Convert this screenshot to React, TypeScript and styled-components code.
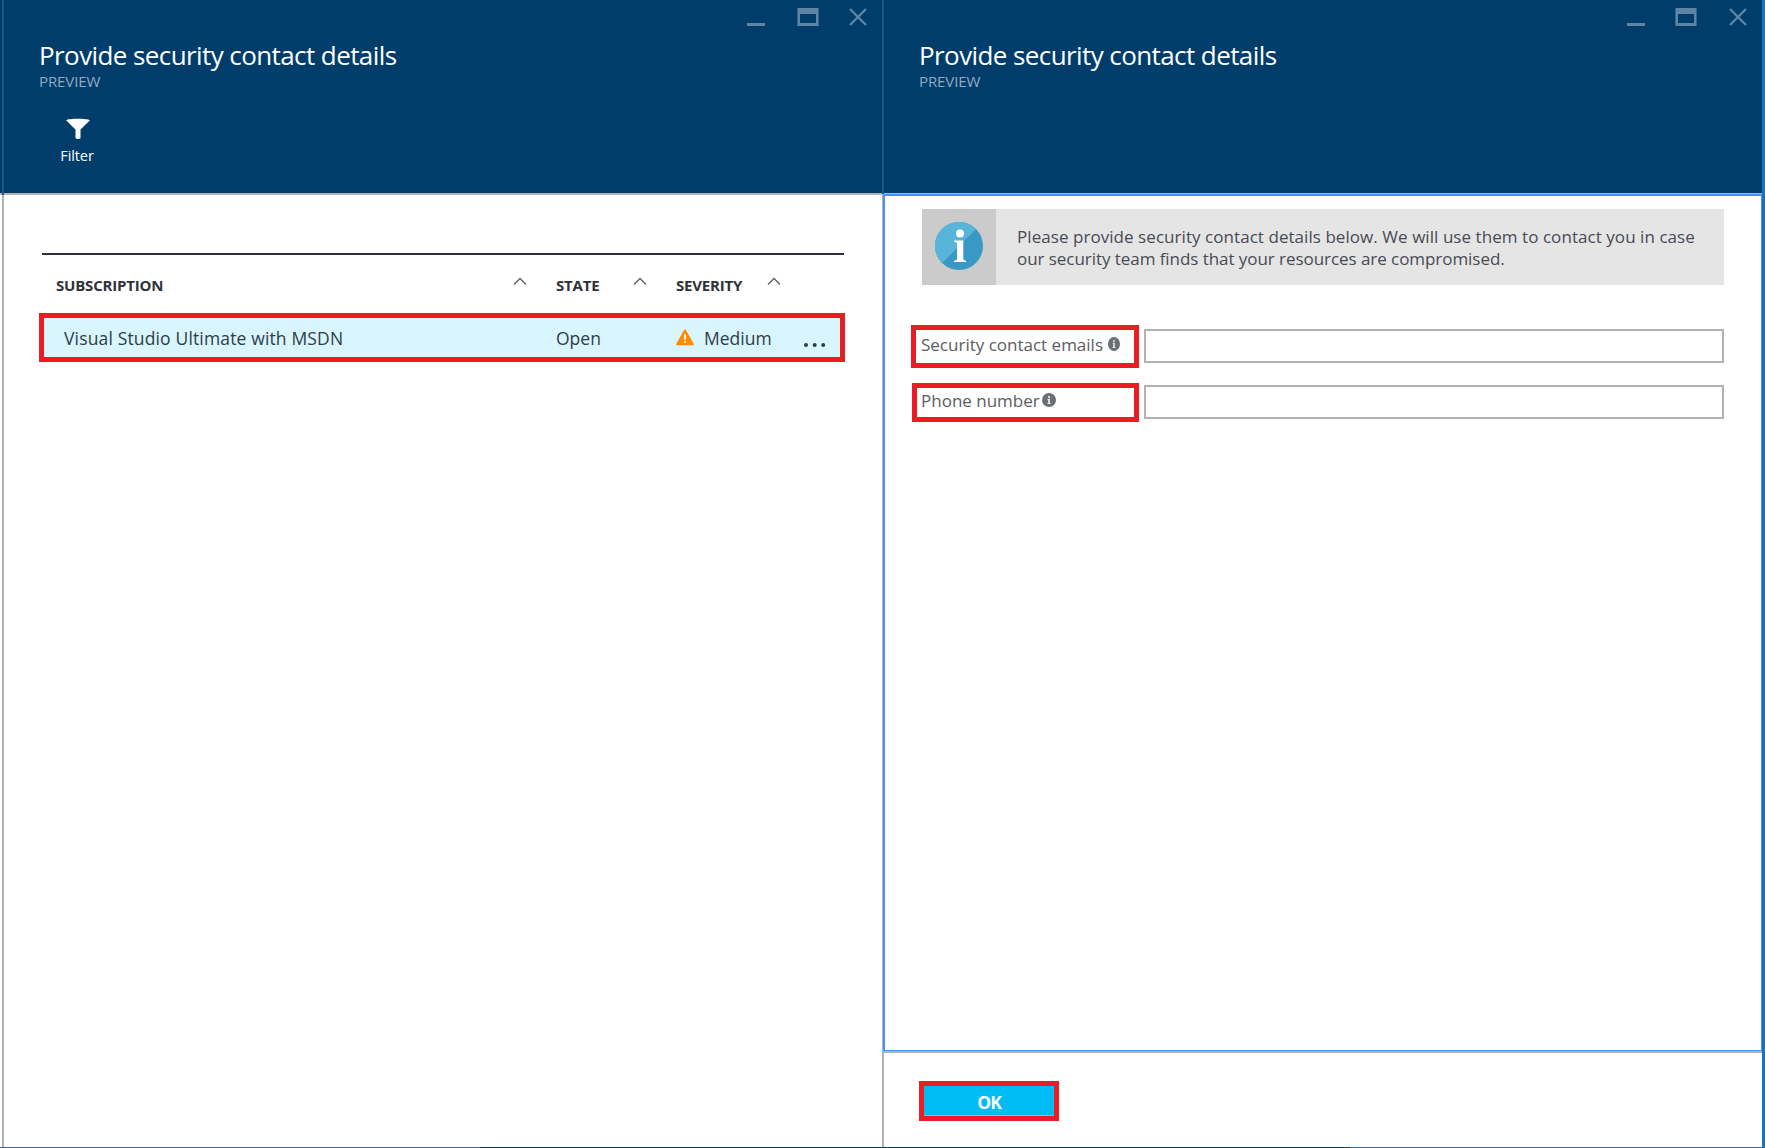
import React from "react";
import styled, { createGlobalStyle } from "styled-components";

const Global = createGlobalStyle`
  * { box-sizing: border-box; }
  body { margin: 0; background: #fff; overflow: hidden; }
  body, input, button { font-family: "Open Sans", "Noto Sans", sans-serif; }
`;

const Screen = styled.div`
  display: grid;
  grid-template-columns: 2px 880px 880px 3px;
  grid-template-rows: 1147px 1px;
  width: 1765px;
  height: 1148px;
`;

const Gutter = styled.div`
  border-top: 193px solid #003d6b;
  &::after { content: ""; display: block; height: 2px; background: #b3b3b3; }
`;

const DesktopEdge = styled.div`
  background: #1074c8;
`;

const BottomEdge = styled.div`
  grid-column: 1 / -1;
  background: linear-gradient(to right, #1074c8 480px, #0a4068 480px 1350px, #1074c8 1350px);
`;

const Blade = styled.section`
  display: flex;
  flex-direction: column;
  min-width: 0;
`;

const BladeHeader = styled.header<{ $line: number }>`
  flex: none;
  height: ${(p) => 193 + p.$line}px;
  background: #003d6b;
  border-left: 2px solid #1f5480;
  box-shadow: inset 0 -${(p) => p.$line}px #b3b3b3;
  color: #fff;
  display: flex;
  flex-direction: column;
`;

const WindowButtons = styled.div`
  display: flex;
  justify-content: flex-end;
  padding: 8px 15px 0 0;
  height: 39px;
`;

const WindowIcon = styled.svg<{ $gap?: number }>`
  display: block;
  height: 18px;
  margin-right: ${(p) => p.$gap ?? 0}px;
  color: #5e84a4;
`;

const Title = styled.h1`
  margin: 0 0 0 35px;
  height: 33px;
  font-size: 26px;
  font-weight: 400;
  line-height: 33px;
  letter-spacing: -0.59px;
  white-space: nowrap;
`;

const Subtitle = styled.div`
  margin: 0 0 0 35px;
  height: 20px;
  font-size: 15px;
  line-height: 19px;
  font-weight: 500;
  letter-spacing: -0.1px;
  color: #91abc1;
`;

const Command = styled.button`
  align-self: flex-start;
  margin: 26px 0 0 42px;
  padding: 0;
  width: 62px;
  border: 0;
  background: none;
  color: #fff;
  font-size: 14.5px;
  font-weight: 500;
  line-height: 20px;
  letter-spacing: -0.1px;
  display: flex;
  flex-direction: column;
  align-items: center;
  gap: 7px;
  svg { margin-left: 2px; }
`;

const ListBody = styled.div`
  flex: 1;
  border-left: 2px solid #b3b3b3;
  padding: 58px 37px 0 35px;
`;

const HeadRow = styled.div`
  margin: 0 1px 0 3px;
  height: 60px;
  border-top: 2px solid #2f323a;
  display: grid;
  grid-template-columns: 500px 120px 1fr;
  padding: 20px 0 0 14px;
`;

const HeadCell = styled.div<{ $w: number }>`
  display: flex;
  width: ${(p) => p.$w}px;
  justify-content: space-between;
  align-items: flex-start;
  font-size: 15px;
  line-height: 21px;
  font-weight: 700;
  letter-spacing: -0.2px;
  color: #2f323a;
`;

const Caret = styled.svg`
  margin-top: 2px;
  flex: none;
`;

const Row = styled.div`
  height: 49px;
  border: 5px solid #ed1c24;
  background: #d9f5fe;
  display: grid;
  grid-template-columns: 492px 120px 28px 100px 1fr;
  align-items: center;
  padding: 0 0 0 20px;
  color: #2f3d48;
  font-size: 17.5px;
  font-weight: 500;
  line-height: 24px;
  white-space: nowrap;
`;

const Cell = styled.span<{ $ls?: number }>`
  padding-top: 1px;
  letter-spacing: ${(p) => p.$ls ?? 0}px;
`;

const FormFrame = styled.div`
  height: 857px;
  border-left: 1px solid #b3b3b3;
`;

const FormBody = styled.div`
  height: 100%;
  border: 2px solid #4a90ff;
  border-right-width: 1px;
  border-bottom-width: 1px;
  padding: 13px 37px 0 26px;
  display: flex;
  flex-direction: column;
`;

const InfoBar = styled.div`
  display: flex;
  height: 76px;
  margin-left: 11px;
  background: #e5e5e5;
`;

const InfoBadge = styled.div`
  width: 74px;
  background: #cbcbcb;
  padding: 13px;
`;

const InfoText = styled.p`
  margin: 0;
  padding: 17px 0 0 21px;
  font-size: 17px;
  line-height: 22px;
  color: #484b54;
  white-space: nowrap;
`;

const InfoLine = styled.span<{ $ls: number }>`
  display: block;
  letter-spacing: ${(p) => p.$ls}px;
`;

const Field = styled.div<{ $top: number }>`
  display: flex;
  justify-content: flex-end;
  align-items: flex-start;
  margin-top: ${(p) => p.$top}px;
`;

const FieldLabel = styled.label<{ $w: number; $h: number; $pad: number; $gap: number; $line: number; $icon: number }>`
  display: flex;
  width: ${(p) => p.$w}px;
  height: ${(p) => p.$h}px;
  border: 5px solid #ed1c24;
  padding-left: ${(p) => p.$pad}px;
  gap: ${(p) => p.$gap}px;
  margin-right: 5px;
  font-size: 17px;
  line-height: ${(p) => p.$line}px;
  color: #5a5d62;
  white-space: nowrap;
  svg { margin-top: ${(p) => p.$icon}px; flex: none; }
`;

const TextInput = styled.input<{ $top: number }>`
  width: 580px;
  height: 34px;
  margin: ${(p) => p.$top}px 0 0;
  border: 2px solid #b3b3b3;
  background: #fff;
  outline: none;
`;

const Footer = styled.footer`
  flex: 1;
  border-left: 2px solid #b3b3b3;
  border-top: 2px solid #b3b3b3;
  padding: 28px 0 0 35px;
`;

const OkButton = styled.button`
  display: block;
  width: 140px;
  height: 40px;
  padding: 1px 0 0;
  border: 5px solid #ed1c24;
  background: #00bcf5;
  box-shadow: inset 0 -1px #8fb6cc;
  color: #fff;
  font-size: 17.5px;
  font-weight: 700;
  line-height: 30px;
  letter-spacing: -1px;
`;

function WindowControls({ gaps }: { gaps: [number, number] }) {
  return (
    <WindowButtons>
      <WindowIcon $gap={gaps[0]} width="18" height="18" viewBox="0 0 18 18">
        <path d="M0 15h18v3H0z" fill="currentColor" />
      </WindowIcon>
      <WindowIcon $gap={gaps[1]} width="22" height="18" viewBox="0 0 22 18">
        <path fillRule="evenodd" d="M.4 0h21.2v18H.4zM3 6v9h16V6z" fill="currentColor" />
      </WindowIcon>
      <WindowIcon width="18" height="18" viewBox="0 0 18 18">
        <path d="M1 1l16 16M17 1L1 17" stroke="currentColor" strokeWidth="2.4" />
      </WindowIcon>
    </WindowButtons>
  );
}

function SortCaret() {
  return (
    <Caret width="14" height="9" viewBox="0 0 14 9">
      <path d="M1 7.500l6-6 6 6" fill="none" stroke="#5d6066" strokeWidth="1.3" />
    </Caret>
  );
}

function HintIcon({ width }: { width: number }) {
  return (
    <svg width={width} height="14" viewBox="0 0 14 14" preserveAspectRatio="none">
      <circle cx="7" cy="7" r="7" fill="#6b6e73" />
      <path d="M6 3h2v1.700H6zM5.400 5.700H8v4.300h.7v1H5.400v-1H6.100V6.700h-.7z" fill="#e4e5e6" />
    </svg>
  );
}

export default function App() {
  return (
    <>
      <Global />
      <Screen>
        <Gutter />
        <Blade>
          <BladeHeader $line={2}>
            <WindowControls gaps={[32, 30]} />
            <Title>Provide security contact details</Title>
            <Subtitle>PREVIEW</Subtitle>
            <Command>
              <svg width="24" height="21" viewBox="0 0 24 21">
                <path d="M0 2.2C3 .2 21 .2 24 2.2L14.5 11.5V20.2q-2.5 1.4-5 0V11.5z" fill="#fff" />
              </svg>
              Filter
            </Command>
          </BladeHeader>
          <ListBody>
            <HeadRow>
              <HeadCell $w={471}>SUBSCRIPTION<SortCaret /></HeadCell>
              <HeadCell $w={91}>STATE<SortCaret /></HeadCell>
              <HeadCell $w={105}>SEVERITY<SortCaret /></HeadCell>
            </HeadRow>
            <Row>
              <Cell $ls={0.15}>Visual Studio Ultimate with MSDN</Cell>
              <Cell>Open</Cell>
              <svg width="18" height="17" viewBox="0 0 18 17">
                <path d="M9 .5q.7 0 1.2.9l7.5 13.400q.6 1.500-.8 1.500H1.100q-1.400 0-.8-1.500L7.800 1.400Q8.300.5 9 .5z" fill="#ff8c00" />
                <path d="M8 5.500h2l-.3 5.300H8.300zM8 12h2v1.800H8z" fill="#fff" />
              </svg>
              <Cell>Medium</Cell>
              <svg width="22" height="24" viewBox="0 0 22 24">
                <g fill="#2f3d48">
                  <circle cx="2" cy="19" r="2" />
                  <circle cx="10.7" cy="19" r="2" />
                  <circle cx="19.2" cy="19" r="2" />
                </g>
              </svg>
            </Row>
          </ListBody>
        </Blade>
        <Blade>
          <BladeHeader $line={1}>
            <WindowControls gaps={[30, 32]} />
            <Title>Provide security contact details</Title>
            <Subtitle>PREVIEW</Subtitle>
          </BladeHeader>
          <FormFrame>
            <FormBody>
              <InfoBar>
                <InfoBadge>
                  <svg width="48" height="48" viewBox="0 0 48 48">
                    <circle cx="24" cy="24" r="24" fill="#3999c6" />
                    <path d="M7 41A24 24 0 0 1 41 7z" fill="#59b4d9" />
                    <circle cx="25" cy="11.5" r="4" fill="#fff" />
                    <path d="M19 18.500h9.300V37q0 1.600 2.700 1.700V40H19v-1.300q3-.1 3-1.700V21.500q0-1.500-3-1.700z" fill="#fff" />
                  </svg>
                </InfoBadge>
                <InfoText>
                  <InfoLine $ls={0.055}>Please provide security contact details below. We will use them to contact you in case</InfoLine>
                  <InfoLine $ls={-0.055}>our security team finds that your resources are compromised.</InfoLine>
                </InfoText>
              </InfoBar>
              <Field $top={40}>
                <FieldLabel $w={228} $h={43} $pad={5} $gap={5} $line={29} $icon={7} htmlFor="emails">
                  Security contact emails
                  <HintIcon width={12} />
                </FieldLabel>
                <TextInput id="emails" $top={4} />
              </Field>
              <Field $top={15}>
                <FieldLabel $w={227} $h={39} $pad={4} $gap={2} $line={25} $icon={5} htmlFor="phone">
                  Phone number
                  <HintIcon width={14} />
                </FieldLabel>
                <TextInput id="phone" $top={2} />
              </Field>
            </FormBody>
          </FormFrame>
          <Footer>
            <OkButton>OK</OkButton>
          </Footer>
        </Blade>
        <DesktopEdge />
        <BottomEdge />
      </Screen>
    </>
  );
}
